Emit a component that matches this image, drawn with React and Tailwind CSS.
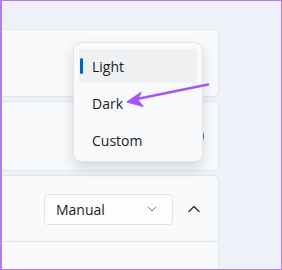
export default function App() {
  const font = { fontFamily: '"Segoe UI", "Open Sans", "Noto Sans", sans-serif' };
  return (
    <div
      className="relative w-[282px] h-[270px] overflow-hidden bg-[#eef2f8] border-t border-r border-b border-l-2 border-[#b57bef] box-border"
      style={font}
    >
      <div className="flex flex-col gap-[4px] pt-[28px] w-[217px]">
        {/* card 1 */}
        <div className="h-[68px] bg-[#f9fafc] border border-l-0 border-[#e3e6ea] rounded-r-[6px]" />
        {/* card 2 */}
        <div className="h-[70px] bg-[#f9fafc] border border-l-0 border-[#e3e6ea] rounded-r-[6px] flex items-center justify-end pr-[14px]">
          <div className="w-[40px] h-[20px] rounded-full bg-[#0067c0]" />
        </div>
        {/* card 3 */}
        <div className="h-[120px] bg-[#f9fafc] border border-l-0 border-[#e3e6ea] rounded-tr-[6px] flex flex-col">
          <div className="h-[66px] flex items-center justify-end pr-[18px] gap-[15px] border-b border-[#e3e5e8]">
            <div className="w-[129px] h-[31px] bg-[#fdfdfe] border border-[#e3e3e5] rounded-[4px] flex items-center justify-between pl-[11px] pr-[15px] mt-[1px]">
              <span className="text-[14px] text-[#1c1c1c]">Manual</span>
              <svg width="10" height="6" viewBox="0 0 10 6" fill="none">
                <path d="M1 1 L5 5 L9 1" stroke="#7a7a7a" strokeWidth="1" strokeLinecap="round" strokeLinejoin="round" />
              </svg>
            </div>
            <svg width="12" height="8" viewBox="0 0 12 8" fill="none" className="mt-[1px]">
              <path d="M1 6.5 L6 1.5 L11 6.5" stroke="#2a2a2a" strokeWidth="1.3" strokeLinecap="round" strokeLinejoin="round" />
            </svg>
          </div>
        </div>
      </div>

      {/* dropdown menu */}
      <div className="absolute left-[71px] top-[41px] w-[130px] h-[120px] rounded-[8px] bg-[#f8f9fb] border border-[#e2e4e8] shadow-[0_6px_14px_rgba(0,0,0,0.14)] px-[5px] pt-[6px] flex flex-col gap-[3px]">
        <div className="relative h-[34px] rounded-[4px] bg-[#eff0f2] flex items-center pl-[13px]">
          <div className="absolute left-[1px] top-[9px] w-[3px] h-[16px] rounded-full bg-[#0067c0]" />
          <span className="text-[14px] text-[#1c1c1c]">Light</span>
        </div>
        <div className="h-[34px] rounded-[4px] flex items-center pl-[13px]">
          <span className="text-[14px] text-[#1c1c1c]">Dark</span>
        </div>
        <div className="h-[34px] rounded-[4px] flex items-center pl-[13px]">
          <span className="text-[14px] text-[#1c1c1c]">Custom</span>
        </div>
      </div>

      {/* purple annotation arrow */}
      <svg className="absolute left-[-2px] top-[-1px] pointer-events-none" width="282" height="270" viewBox="0 0 282 270">
        <path d="M208 84.5 L137 99" stroke="#a855f7" strokeWidth="2.6" strokeLinecap="round" />
        <path d="M127 102 L141 92.5 L137.5 99.5 L143 106.5 Z" fill="#a855f7" stroke="#a855f7" strokeWidth="1.2" strokeLinejoin="round" />
      </svg>
    </div>
  );
}
